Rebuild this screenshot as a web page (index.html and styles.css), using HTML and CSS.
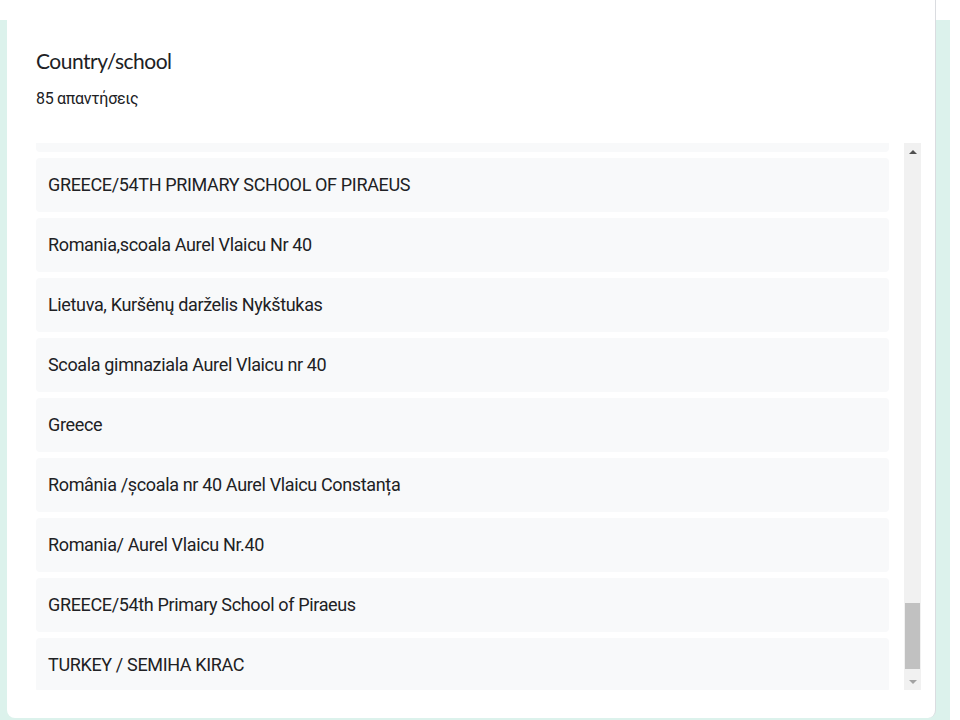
FILE: index.html
```html
<!DOCTYPE html>
<html>
<head>
<meta charset="utf-8">
<link rel="stylesheet" href="styles.css">
</head>
<body>
<div class="frame">
  <div class="card">
    <h2 class="title">Country/school</h2>
    <div class="count">85 απαντήσεις</div>
    <div class="answers">
      <div class="list">
        <div class="item partial"></div>
        <div class="item">GREECE/54TH PRIMARY SCHOOL OF PIRAEUS</div>
        <div class="item">Romania,scoala Aurel Vlaicu Nr 40</div>
        <div class="item">Lietuva, Kuršėnų darželis Nykštukas</div>
        <div class="item">Scoala gimnaziala Aurel Vlaicu nr 40</div>
        <div class="item">Greece</div>
        <div class="item">România /școala nr 40 Aurel Vlaicu Constanța</div>
        <div class="item">Romania/ Aurel Vlaicu Nr.40</div>
        <div class="item">GREECE/54th Primary School of Piraeus</div>
        <div class="item">TURKEY / SEMIHA KIRAC</div>
      </div>
      <div class="scrollbar">
        <div class="arrow up"></div>
        <div class="track"><div class="thumb"></div></div>
        <div class="arrow down"></div>
      </div>
    </div>
  </div>
</div>
</body>
</html>
```

FILE: styles.css
```css
html, body {
  margin: 0;
  padding: 0;
  background: #ffffff;
}
body {
  width: 960px;
  height: 720px;
  overflow: hidden;
}
.frame {
  display: flow-root;
  margin-top: 20px;
  width: 950px;
  height: 700px;
  background: #dcf2ec;
  padding: 0 14px 0 7px;
  box-sizing: border-box;
}
.card {
  margin-top: -20px;
  height: 718px;
  background: #ffffff;
  border-right: 1px solid #dadce0;
  border-radius: 0 0 8px 8px;
  padding: 0 14px 0 29px;
  box-sizing: border-box;
  display: flex;
  flex-direction: column;
}
.title {
  margin: 47px 0 0 0;
  font-family: Lato, Roboto, sans-serif;
  font-weight: 400;
  font-size: 21px;
  line-height: 28px;
  color: #202124;
  letter-spacing: -0.5px;
}
.count {
  margin-top: 14px;
  font-family: Roboto, "Noto Sans", sans-serif;
  font-size: 16px;
  line-height: 20px;
  letter-spacing: -0.3px;
  color: #202124;
}
.answers {
  margin-top: 34px;
  display: flex;
  gap: 15px;
  height: 547px;
}
.list {
  width: 854px;
  overflow: hidden;
  display: flex;
  flex-direction: column;
  gap: 6px;
}
.item {
  flex: none;
  height: 54px;
  box-sizing: border-box;
  padding: 0 12px 1px;
  background: #f8f9fa;
  border-radius: 4px;
  display: flex;
  align-items: center;
  font-family: Roboto, "Noto Sans", sans-serif;
  font-size: 18px;
  letter-spacing: -0.35px;
  color: #202124;
}
.item.partial {
  margin-top: -45px;
}
.scrollbar {
  width: 17px;
  background: #f1f1f1;
  display: flex;
  flex-direction: column;
}
.arrow {
  height: 17px;
  display: flex;
  align-items: center;
  justify-content: center;
  flex: none;
}
.arrow.up::before {
  content: "";
  border-left: 4px solid transparent;
  border-right: 4px solid transparent;
  border-bottom: 4px solid #505050;
}
.arrow.down::before {
  content: "";
  border-left: 4px solid transparent;
  border-right: 4px solid transparent;
  border-top: 4px solid #a3a3a3;
}
.track {
  flex: 1;
  display: flex;
  flex-direction: column;
  justify-content: flex-end;
  align-items: center;
}
.thumb {
  width: 15px;
  height: 66px;
  margin-bottom: 4px;
  background: #c1c1c1;
}
```
